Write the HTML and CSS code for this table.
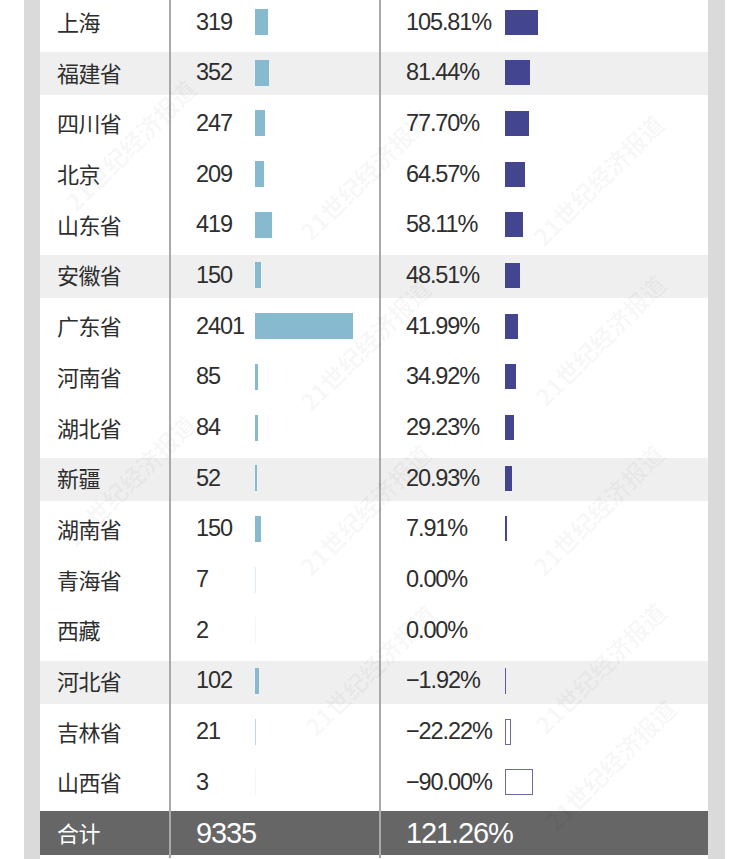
FILE: index.html
```html
<!DOCTYPE html>
<html lang="zh">
<head>
<meta charset="utf-8">
<title>各省数据</title>
<link rel="stylesheet" href="styles.css">
</head>
<body>
<div class="frame">
  <div class="sheet">
    <div class="rows">
      <div class="row"><div class="c name">上海</div><div class="c num"><span class="val">319</span><span class="bar blue" style="width:13.02px"></span></div><div class="c pct"><span class="val">105.81%</span><span class="bar purple" style="width:33px"></span></div></div>
      <div class="row alt"><div class="c name">福建省</div><div class="c num"><span class="val">352</span><span class="bar blue" style="width:14.37px"></span></div><div class="c pct"><span class="val">81.44%</span><span class="bar purple" style="width:25.4px"></span></div></div>
      <div class="row"><div class="c name">四川省</div><div class="c num"><span class="val">247</span><span class="bar blue" style="width:10.08px"></span></div><div class="c pct"><span class="val">77.70%</span><span class="bar purple" style="width:24.24px"></span></div></div>
      <div class="row"><div class="c name">北京</div><div class="c num"><span class="val">209</span><span class="bar blue" style="width:8.53px"></span></div><div class="c pct"><span class="val">64.57%</span><span class="bar purple" style="width:20.14px"></span></div></div>
      <div class="row"><div class="c name">山东省</div><div class="c num"><span class="val">419</span><span class="bar blue" style="width:17.1px"></span></div><div class="c pct"><span class="val">58.11%</span><span class="bar purple" style="width:18.13px"></span></div></div>
      <div class="row alt"><div class="c name">安徽省</div><div class="c num"><span class="val">150</span><span class="bar blue" style="width:6.12px"></span></div><div class="c pct"><span class="val">48.51%</span><span class="bar purple" style="width:15.13px"></span></div></div>
      <div class="row"><div class="c name">广东省</div><div class="c num"><span class="val">2401</span><span class="bar blue" style="width:98px"></span></div><div class="c pct"><span class="val">41.99%</span><span class="bar purple" style="width:13.1px"></span></div></div>
      <div class="row"><div class="c name">河南省</div><div class="c num"><span class="val">85</span><span class="bar blue" style="width:3.47px"></span></div><div class="c pct"><span class="val">34.92%</span><span class="bar purple" style="width:10.89px"></span></div></div>
      <div class="row"><div class="c name">湖北省</div><div class="c num"><span class="val">84</span><span class="bar blue" style="width:3.43px"></span></div><div class="c pct"><span class="val">29.23%</span><span class="bar purple" style="width:9.12px"></span></div></div>
      <div class="row alt"><div class="c name">新疆</div><div class="c num"><span class="val">52</span><span class="bar blue" style="width:2.12px"></span></div><div class="c pct"><span class="val">20.93%</span><span class="bar purple" style="width:6.53px"></span></div></div>
      <div class="row"><div class="c name">湖南省</div><div class="c num"><span class="val">150</span><span class="bar blue" style="width:6.12px"></span></div><div class="c pct"><span class="val">7.91%</span><span class="bar purple" style="width:2.47px"></span></div></div>
      <div class="row"><div class="c name">青海省</div><div class="c num"><span class="val">7</span><span class="bar blue faint" style="width:1px"></span></div><div class="c pct"><span class="val">0.00%</span></div></div>
      <div class="row"><div class="c name">西藏</div><div class="c num"><span class="val">2</span><span class="bar blue faintest" style="width:1px"></span></div><div class="c pct"><span class="val">0.00%</span></div></div>
      <div class="row alt"><div class="c name">河北省</div><div class="c num"><span class="val">102</span><span class="bar blue" style="width:4.16px"></span></div><div class="c pct"><span class="val">−1.92%</span><span class="bar neg thin"></span></div></div>
      <div class="row"><div class="c name">吉林省</div><div class="c num"><span class="val">21</span><span class="bar blue light" style="width:1px"></span></div><div class="c pct"><span class="val">−22.22%</span><span class="bar neg" style="width:4.2px"></span></div></div>
      <div class="row"><div class="c name">山西省</div><div class="c num"><span class="val">3</span><span class="bar blue faintest" style="width:1px"></span></div><div class="c pct"><span class="val">−90.00%</span><span class="bar neg" style="width:26px"></span></div></div>
      <div class="row total"><div class="c name">合计</div><div class="c num"><span class="val big">9335</span></div><div class="c pct"><span class="val big">121.26%</span></div></div>
    </div>
  </div>
  <div class="wm" aria-hidden="true">
    <span class="mark m1">21世纪经济报道</span>
    <span class="mark m2">21世纪经济报道</span>
    <span class="mark m3">21世纪经济报道</span>
    <span class="mark m4">21世纪经济报道</span>
    <span class="mark m5">21世纪经济报道</span>
    <span class="mark m6">21世纪经济报道</span>
    <span class="mark m7">21世纪经济报道</span>
    <span class="mark m8">21世纪经济报道</span>
    <span class="mark m9">21世纪经济报道</span>
    <span class="mark m10">21世纪经济报道</span>
    <span class="mark m12">21世纪经济报道</span>
  </div>
</div>
</body>
</html>
```
FILE: styles.css
```css
html, body {
  margin: 0;
  padding: 0;
  background: #ffffff;
}
body {
  width: 750px;
  height: 859px;
  overflow: hidden;
  font-family: "Liberation Sans", "Noto Sans CJK SC", sans-serif;
  color: #2e2e2e;
}
.frame {
  position: relative;
  margin-left: 24px;
  width: 701px;
  height: 859px;
  box-sizing: border-box;
  padding: 0 17px 0 16px;
  background: #dadada;
  overflow: hidden;
}
.sheet {
  background: #ffffff;
  height: 100%;
  overflow: hidden;
}
.rows {
  margin-top: -3.35px;
}
.row {
  display: grid;
  grid-template-columns: 129px 210px 1fr;
  height: 50.7px;
}
.row.alt {
  background: linear-gradient(180deg, transparent 4.6px, #efefef 4.6px, #efefef 47.6px, transparent 47.6px);
}
.row.total {
  background: linear-gradient(180deg, transparent 3px, #666666 3px, #666666 47px, transparent 47px);
  color: #ffffff;
}
.c {
  display: flex;
  align-items: center;
  min-width: 0;
}
.c.num, .c.pct {
  border-left: 2px solid #a9a9a9;
}
.name {
  padding-left: 17px;
  font-family: "Noto Sans CJK SC", sans-serif;
  font-size: 22px;
  letter-spacing: -0.6px;
  padding-bottom: 2px;
}
.num {
  padding-left: 25px;
}
.pct {
  padding-left: 25px;
}
.val {
  font-size: 23.5px;
  letter-spacing: -1.1px;
  flex: none;
}
.num .val {
  width: 59px;
}
.pct .val {
  width: 99px;
}
.val.big {
  font-size: 29px;
  letter-spacing: -1.1px;
  width: auto;
}
.bar {
  display: block;
  flex: none;
}
.bar.blue {
  height: 26px;
  background: #87b9cf;
}
.bar.blue.light { opacity: 0.55; }
.bar.blue.faint { opacity: 0.25; }
.bar.blue.faintest { opacity: 0.12; }
.bar.purple {
  height: 25px;
  background: #43458f;
}
.bar.neg {
  height: 24px;
  border: 1.5px solid #6a6a9c;
  background: #ffffff;
}
.bar.neg.thin {
  width: 0;
  border-width: 0 0 0 1.5px;
  height: 26px;
  border-color: #5b5b98;
}
.wm {
  position: absolute;
  inset: 0;
  pointer-events: none;
}
.mark {
  position: absolute;
  width: 200px;
  margin-left: -100px;
  margin-top: -14px;
  text-align: center;
  font-family: "Noto Sans CJK SC", sans-serif;
  font-weight: 700;
  font-size: 24px;
  line-height: 28px;
  color: rgba(0, 0, 0, 0.04);
  transform: rotate(-45deg);
  white-space: nowrap;
}
.m1 { left: 106px; top: 145px; }
.m2 { left: 341px; top: 175px; }
.m3 { left: 574px; top: 180px; }
.m4 { left: 341px; top: 345px; }
.m5 { left: 576px; top: 340px; }
.m6 { left: 341px; top: 510px; }
.m7 { left: 574px; top: 510px; }
.m8 { left: 346px; top: 670px; }
.m9 { left: 576px; top: 668px; }
.m10 { left: 586px; top: 765px; }
.m12 { left: 106px; top: 480px; }
```
